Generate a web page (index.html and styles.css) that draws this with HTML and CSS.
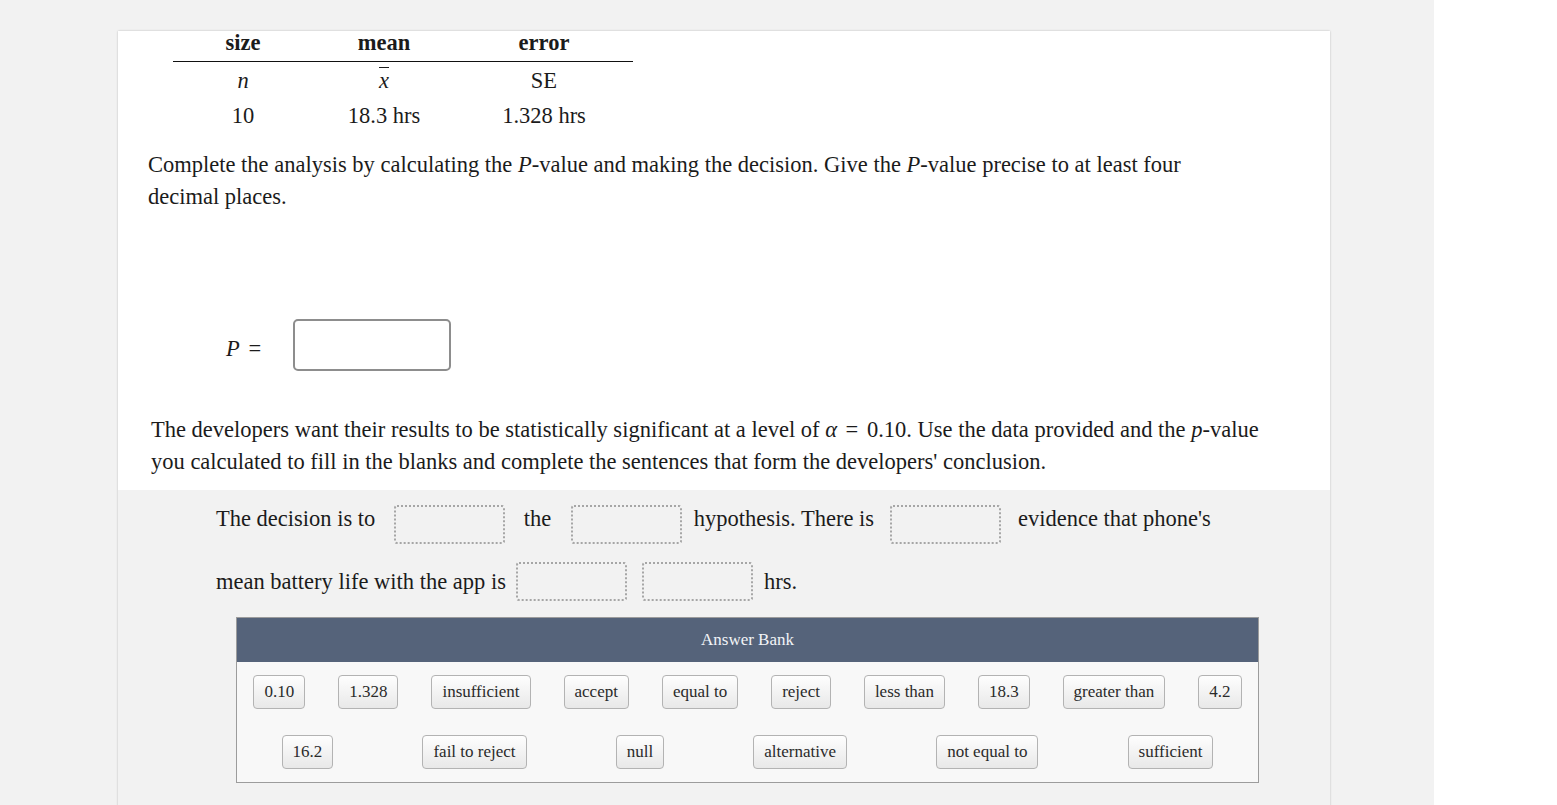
FILE: index.html
```html
<!DOCTYPE html>
<html lang="en">
<head>
<meta charset="utf-8">
<title>P-value analysis</title>
<link rel="stylesheet" href="styles.css">
</head>
<body>
<div class="page">
  <div class="card">
    <div class="top">
      <table class="stats">
        <tr class="head"><th class="c1">size</th><th class="c2">mean</th><th class="c3">error</th></tr>
        <tr class="sym"><td><i>n</i></td><td><i class="xbar">x</i></td><td>SE</td></tr>
        <tr><td>10</td><td>18.3 hrs</td><td>1.328 hrs</td></tr>
      </table>
      <p class="para p1">Complete the analysis by calculating the <i>P</i>-value and making the decision. Give the <i>P</i>-value precise to at least four decimal places.</p>
      <div class="prow">
        <span class="plabel"><i>P</i> <span class="eq">=</span></span>
        <div class="pbox"></div>
      </div>
      <p class="para p2">The developers want their results to be statistically significant at a level of <i>α</i> <span class="eq">=</span> 0.10. Use the data provided and the <i>p</i>-value you calculated to fill in the blanks and complete the sentences that form the developers' conclusion.</p>
    </div>
    <div class="dnd">
      <div class="sline l1">
        <span class="t">The decision is to</span>
        <span class="blank b1"></span>
        <span class="t">the</span>
        <span class="blank b2"></span>
        <span class="t">hypothesis. There is</span>
        <span class="blank b3"></span>
        <span class="t">evidence that phone's</span>
      </div>
      <div class="sline l2">
        <span class="t">mean battery life with the app is</span>
        <span class="blank b4"></span>
        <span class="blank b5"></span>
        <span class="t">hrs.</span>
      </div>
      <div class="bank">
        <div class="bank-head">Answer Bank</div>
        <div class="bank-body">
          <div class="brow">
            <span class="chip">0.10</span>
            <span class="chip">1.328</span>
            <span class="chip">insufficient</span>
            <span class="chip">accept</span>
            <span class="chip">equal to</span>
            <span class="chip">reject</span>
            <span class="chip">less than</span>
            <span class="chip">18.3</span>
            <span class="chip">greater than</span>
            <span class="chip">4.2</span>
          </div>
          <div class="brow">
            <span class="chip">16.2</span>
            <span class="chip">fail to reject</span>
            <span class="chip">null</span>
            <span class="chip">alternative</span>
            <span class="chip">not equal to</span>
            <span class="chip">sufficient</span>
          </div>
        </div>
      </div>
    </div>
  </div>
</div>
</body>
</html>
```
FILE: styles.css
```css
* { box-sizing: border-box; }

html, body {
  margin: 0;
  padding: 0;
  background: #ffffff;
}

body {
  font-family: "Liberation Serif", "Times New Roman", serif;
  font-size: 22.5px;
  color: #1b1b1b;
}

.page {
  width: 1434px;
  height: 805px;
  overflow: hidden;
  background: #f2f2f2;
  padding-top: 31px;
}

.card {
  margin-left: 118px;
  width: 1212px;
  min-height: 800px;
  background: #f2f2f2;
  box-shadow: 0 0 2px rgba(0, 0, 0, 0.22);
}

.top {
  background: #ffffff;
  padding-bottom: 12px;
}

/* table */
.stats {
  margin-left: 55px;
  border-collapse: collapse;
  border-spacing: 0;
}

.stats th,
.stats td {
  padding: 0;
  text-align: center;
}

.stats th {
  font-weight: bold;
  line-height: 19px;
  padding-top: 2px;
  padding-bottom: 9px;
  border-bottom: 1px solid #111;
}

.stats td {
  line-height: 34px;
  padding-bottom: 3px;
}

.stats .sym td {
  padding-top: 2px;
  padding-bottom: 1px;
}

.stats .c1 { width: 140px; }
.stats .c2 { width: 142px; }
.stats .c3 { width: 178px; }

.xbar {
  text-decoration: overline;
  text-decoration-thickness: 1px;
}

.eq {
  padding: 0 3px;
}

/* paragraphs */
.para {
  margin: 0;
  line-height: 32px;
}

.p1 {
  margin-top: 13px;
  padding-left: 30px;
  max-width: 1130px;
}

.p2 {
  margin-top: 43px;
  padding-left: 33px;
  max-width: 1158px;
}

/* P = input */
.prow {
  display: flex;
  align-items: flex-start;
  margin-top: 106px;
  padding-left: 108px;
}

.plabel {
  width: 67px;
  line-height: 25px;
  margin-top: 17px;
}

.pbox {
  width: 158px;
  height: 52px;
  border: 2px solid #8d8d8d;
  border-radius: 5px;
  background: #ffffff;
}

/* drag & drop area */
.dnd {
  background: #f2f2f2;
  padding: 15px 0 40px 98px;
}

.sline {
  display: flex;
  align-items: flex-start;
  height: 39px;
}

.l2 { margin-top: 18px; }

.t {
  line-height: 25px;
  white-space: nowrap;
}

.l1 .t { margin-top: 1px; }
.l2 .t { margin-top: 7px; }

.blank {
  width: 111px;
  height: 39px;
  border: 2px dotted #a6a6a6;
  border-radius: 3px;
  flex: none;
}

.b1 { margin: 0 19px 0 18.5px; }
.b2 { margin: 0 12px 0 19.5px; }
.b3 { margin: 0 17px 0 16px; }
.b4 { margin: 0 15px 0 10px; }
.b5 { margin: 0 11px 0 0; }

/* answer bank */
.bank {
  margin-top: 16px;
  margin-left: 20px;
  width: 1023px;
  border: 1px solid #9c9c9c;
}

.bank-head {
  height: 44px;
  line-height: 44px;
  background: #55637a;
  color: #f2f4f7;
  font-size: 17px;
  text-align: center;
}

.bank-body {
  background: #f8f8f8;
  padding: 13px 0;
}

.brow {
  display: flex;
  justify-content: space-around;
}

.brow + .brow { margin-top: 26px; }

.chip {
  display: inline-block;
  height: 34px;
  line-height: 32px;
  padding: 0 10px;
  font-size: 17px;
  color: #2a2a2a;
  border: 1px solid #b3b3b3;
  border-radius: 4px;
  background: linear-gradient(#fefefe, #e8e8e8);
  white-space: nowrap;
}
```
